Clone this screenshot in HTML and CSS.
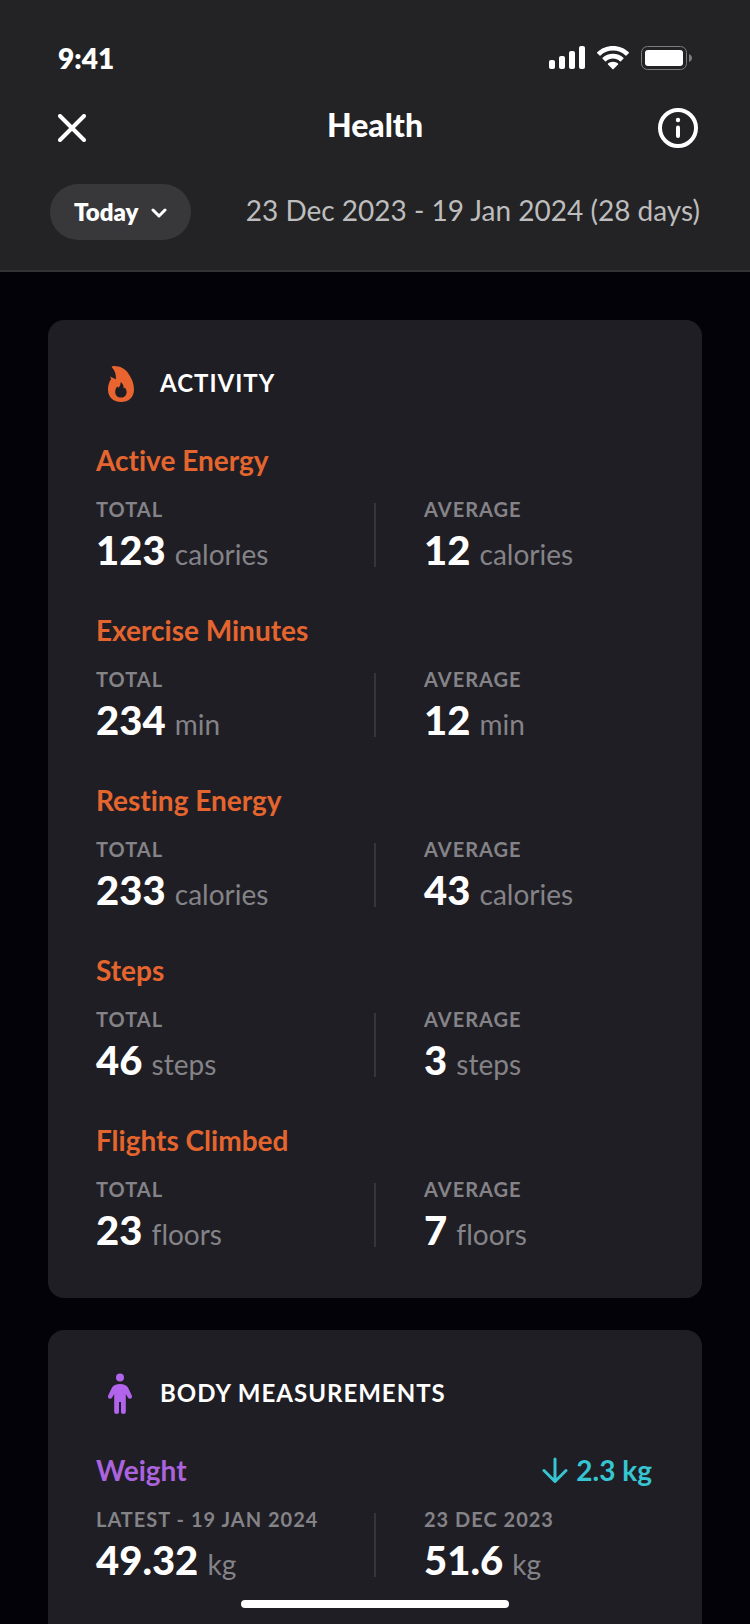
FILE: index.html
```html
<!DOCTYPE html>
<html lang="en">
<head>
    <meta charset="UTF-8">
    <meta name="viewport" content="width=device-width, initial-scale=1.0">
    <title>Health</title>
    <link rel="stylesheet" href="styles.css">
</head>
<body>
    <header class="top">
        <div class="status-bar">
            <span class="clock">9:41</span>
            <div class="status-icons">
                <svg width="36" height="24" viewBox="0 0 36 24" fill="#fff">
                    <rect x="0" y="14" width="6" height="9" rx="2"/>
                    <rect x="10" y="10" width="6" height="13" rx="2"/>
                    <rect x="20" y="5" width="6" height="18" rx="2"/>
                    <rect x="30" y="0" width="6" height="23" rx="2"/>
                </svg>
                <svg width="32" height="24" viewBox="0 0 32 24" fill="#fff">
                    <path d="M16 0C22.200 0 27.900 2.400 31.800 6.300Q32.200 6.800 31.800 7.300L29.400 9.500Q29 9.900 28.500 9.500C25.200 6.300 20.800 4.600 16 4.600S6.800 6.300 3.500 9.500Q3 9.900 2.600 9.500L0.200 7.300Q-0.200 6.800 0.200 6.300C4.100 2.400 9.800 0 16 0Z"/>
                    <path d="M16 7.800C20 7.800 23.700 9.300 26.400 11.800Q26.900 12.300 26.400 12.800L23.900 15.200Q23.400 15.600 22.900 15.200C21 13.500 18.600 12.500 16 12.500S11 13.500 9.100 15.200Q8.600 15.600 8.100 15.200L5.600 12.800Q5.100 12.300 5.600 11.800C8.300 9.300 12 7.800 16 7.800Z"/>
                    <path d="M16 15.800C18 15.800 19.700 16.500 21 17.600Q21.500 18.100 21 18.600L16.600 23Q16 23.600 15.400 23L11 18.600Q10.500 18.100 11 17.600C12.300 16.500 14 15.800 16 15.800Z"/>
                </svg>
                <svg width="51" height="24" viewBox="0 0 51 24" fill="none">
                    <rect x="0.500" y="0.500" width="45" height="23" rx="6" stroke="#7c7c7e"/>
                    <rect x="4" y="4" width="38" height="16" rx="3" fill="#fff"/>
                    <path d="M48 8C50 8.800 51 10.300 51 12S50 15.200 48 16Z" fill="#7c7c7e"/>
                </svg>
            </div>
        </div>

        <div class="nav-bar">
            <button class="icon-button" type="button" aria-label="Close">
                <svg width="28" height="28" viewBox="0 0 28 28" stroke="#fff" stroke-width="4" stroke-linecap="round">
                    <path d="M2 2L26 26M26 2L2 26"/>
                </svg>
            </button>
            <h1>Health</h1>
            <button class="icon-button info" type="button" aria-label="Info">
                <svg width="40" height="40" viewBox="0 0 40 40" fill="none" stroke="#fff" stroke-width="4" stroke-linecap="round">
                    <circle cx="20" cy="20" r="18"/>
                    <path d="M20 19.500V28"/>
                    <circle cx="20" cy="12" r="2.200" fill="#fff" stroke="none"/>
                </svg>
            </button>
        </div>

        <div class="range">
            <div class="period">
                <select id="period" aria-label="Period">
                    <option>Today</option>
                </select>
                <svg class="chevron" width="16" height="10" viewBox="0 0 16 10" fill="none" stroke="#fff" stroke-width="3" stroke-linecap="round" stroke-linejoin="round">
                    <path d="M2 2L8 8L14 2"/>
                </svg>
            </div>
            <p class="dates">23 Dec 2023 - 19 Jan 2024 (28 days)</p>
        </div>
    </header>

    <main>
        <section class="card activity">
            <div class="card-head">
                <svg width="48" height="48" viewBox="0 0 48 48">
                    <path fill="#ea6430" fill-rule="evenodd" d="M16.500 6.200C23 5.600 29 8.500 32.200 13.300C35.500 18 38 23.500 38 29.500C38 37.500 32.500 42 25 42C17 42 12 37 12 29.500C12 25.500 13 22 15.200 19L13.900 16.600L20 19.200C20.200 14.500 19 10.500 16 7.400Q15.200 6.500 16.500 6.200ZM24.600 22C24.900 25 23.400 26.200 22.600 27.800L21.200 26.600C19.900 28.200 19.200 30 19.200 32C19.200 35.500 21.600 37.600 25 37.600S30.600 35.300 30.600 32C30.600 30 29.800 28.500 28.700 27.400L27.600 28.600C27.800 25.800 26.800 23.500 24.600 22Z"/>
                </svg>
                <h2>ACTIVITY</h2>
            </div>

            <article class="metric">
                <h3>Active Energy</h3>
                <dl class="stats">
                    <div><dt>TOTAL</dt><dd><b>123</b> calories</dd></div>
                    <div><dt>AVERAGE</dt><dd><b>12</b> calories</dd></div>
                </dl>
            </article>

            <article class="metric">
                <h3>Exercise Minutes</h3>
                <dl class="stats">
                    <div><dt>TOTAL</dt><dd><b>234</b> min</dd></div>
                    <div><dt>AVERAGE</dt><dd><b>12</b> min</dd></div>
                </dl>
            </article>

            <article class="metric">
                <h3>Resting Energy</h3>
                <dl class="stats">
                    <div><dt>TOTAL</dt><dd><b>233</b> calories</dd></div>
                    <div><dt>AVERAGE</dt><dd><b>43</b> calories</dd></div>
                </dl>
            </article>

            <article class="metric">
                <h3>Steps</h3>
                <dl class="stats">
                    <div><dt>TOTAL</dt><dd><b>46</b> steps</dd></div>
                    <div><dt>AVERAGE</dt><dd><b>3</b> steps</dd></div>
                </dl>
            </article>

            <article class="metric">
                <h3>Flights Climbed</h3>
                <dl class="stats">
                    <div><dt>TOTAL</dt><dd><b>23</b> floors</dd></div>
                    <div><dt>AVERAGE</dt><dd><b>7</b> floors</dd></div>
                </dl>
            </article>
        </section>

        <section class="card body-card">
            <div class="card-head">
                <svg width="48" height="48" viewBox="0 0 48 48" fill="#b265ec">
                    <circle cx="24" cy="7.500" r="4"/>
                    <path d="M24 14C28 14 30.500 15.200 32 17.500L35.800 25.500C37 28.500 33.500 30 32 27.800L29.800 24V42Q29.800 44 27.400 44T25 42V32H23V42Q23 44 20.600 44T18.200 42V24L16 27.800C14.500 30 11 28.500 12.200 25.500L16 17.500C17.500 15.200 20 14 24 14Z"/>
                </svg>
                <h2>BODY MEASUREMENTS</h2>
            </div>

            <article class="metric">
                <div class="metric-head">
                    <h3>Weight</h3>
                    <span class="trend">
                        <svg width="26" height="26" viewBox="0 0 26 26" fill="none" stroke="#36c6d2" stroke-width="3" stroke-linecap="round" stroke-linejoin="round">
                            <path d="M13 2V24M2 13.500L13 24.500L24 13.500"/>
                        </svg>
                        2.3 kg
                    </span>
                </div>
                <dl class="stats">
                    <div><dt>LATEST - 19 JAN 2024</dt><dd><b>49.32</b> kg</dd></div>
                    <div><dt>23 DEC 2023</dt><dd><b>51.6</b> kg</dd></div>
                </dl>
            </article>
        </section>
    </main>

    <div class="home-indicator"></div>
</body>
</html>
```
FILE: styles.css
```css
* {
    box-sizing: border-box;
    margin: 0;
    padding: 0;
}
body {
    display: flex;
    flex-direction: column;
    height: 100vh;
    overflow: hidden;
    background: #030209;
    color: #fff;
    font-family: Lato, "Open Sans", sans-serif;
    font-variant-ligatures: none;
}
svg {
    display: block;
    flex-shrink: 0;
}

/* header */
.top {
    flex-shrink: 0;
    padding: 40px 50px 30px;
    background: #232325;
    border-bottom: 2px solid #333335;
}
.status-bar {
    display: flex;
    justify-content: space-between;
    align-items: center;
    height: 36px;
    padding: 0 8px;
}
.clock {
    font-size: 28px;
    font-weight: 800;
}
.status-icons {
    display: flex;
    align-items: center;
    gap: 12px;
}
.nav-bar {
    display: grid;
    grid-template-columns: 1fr auto 1fr;
    align-items: center;
    height: 72px;
    margin-top: 16px;
}
.nav-bar h1 {
    font-size: 32px;
    font-weight: 900;
    line-height: 36px;
    padding-bottom: 6px;
}
.icon-button {
    justify-self: start;
    padding: 8px;
    background: none;
    border: none;
    cursor: pointer;
}
.icon-button.info {
    justify-self: end;
    padding: 0 2px;
}
.range {
    display: flex;
    justify-content: space-between;
    align-items: center;
    margin-top: 20px;
}
.period {
    position: relative;
}
.period select {
    appearance: none;
    height: 56px;
    padding: 0 52px 2px 24px;
    background: #38383a;
    border: none;
    border-radius: 28px;
    color: #fff;
    font-family: inherit;
    font-size: 24px;
    font-weight: 800;
    cursor: pointer;
}
.chevron {
    position: absolute;
    top: 24px;
    right: 24px;
    pointer-events: none;
}
.dates {
    padding-bottom: 4px;
    color: #bdbdbe;
    font-size: 28px;
    font-weight: 400;
}

/* cards */
main {
    flex: 1;
    display: flex;
    flex-direction: column;
    gap: 32px;
    min-height: 0;
    padding: 48px 48px 0;
    overflow: hidden;
}
.card {
    flex-shrink: 0;
    padding: 40px 48px 44px;
    background: #1f1e24;
    border-radius: 16px;
}
.body-card {
    padding-bottom: 96px;
}
.card-head {
    display: flex;
    align-items: center;
    gap: 16px;
    margin-bottom: 36px;
}
.card-head h2 {
    padding-bottom: 2px;
    font-size: 24px;
    font-weight: 700;
    line-height: 28px;
    letter-spacing: 1px;
}
.metric + .metric {
    margin-top: 40px;
}
.metric h3,
.trend {
    font-size: 28px;
    font-weight: 700;
    line-height: 32px;
}
.metric-head {
    display: flex;
    justify-content: space-between;
}
.activity h3 {
    color: #e5652f;
}
.body-card h3 {
    color: #ab63de;
}
.trend {
    display: flex;
    align-items: center;
    gap: 8px;
    padding-right: 2px;
    color: #36c6d2;
}
.stats {
    display: grid;
    grid-template-columns: 1fr 1fr;
    margin-top: 20px;
    background: linear-gradient(#35353a, #35353a) center / 2px 64px no-repeat;
}
.stats div + div {
    padding-left: 49px;
}
.stats dt {
    color: #848387;
    font-size: 20px;
    font-weight: 700;
    line-height: 26px;
    letter-spacing: 1px;
}
.stats dd {
    padding-top: 8px;
    color: #848387;
    font-size: 28px;
    font-weight: 400;
    line-height: 40px;
}
.stats b {
    margin-right: 2px;
    color: #fff;
    font-size: 40px;
    font-weight: 900;
}

.home-indicator {
    position: fixed;
    bottom: 16px;
    left: 50%;
    width: 268px;
    height: 8px;
    background: #fff;
    border-radius: 4px;
    transform: translateX(-50%);
}
```
